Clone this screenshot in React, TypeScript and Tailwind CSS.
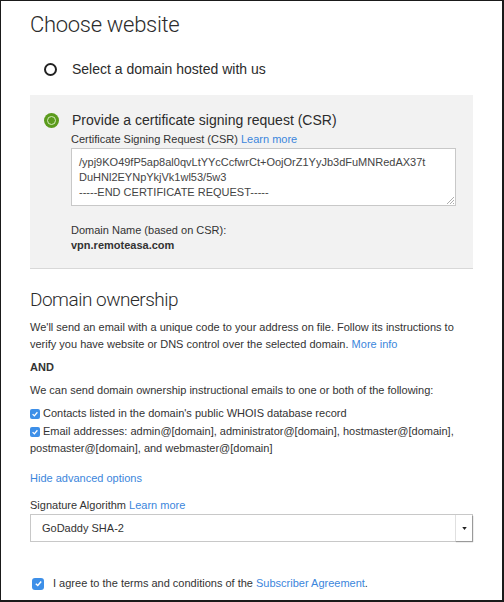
import React from "react";

function Check({ big = false }: { big?: boolean }) {
  return (
    <span
      className={`inline-grid shrink-0 place-items-center bg-[#3d8fe8] ${
        big ? "size-[12px] rounded-[3px]" : "size-[10px] rounded-[2px]"
      }`}
    >
      <svg viewBox="0 0 10 10" className={big ? "size-[9px]" : "size-[8px]"}>
        <path d="M2 5.2 L4.2 7.3 L8 2.8" fill="none" stroke="#fff" strokeWidth="1.6" />
      </svg>
    </span>
  );
}

const heading = { fontFamily: "Roboto, sans-serif" };

export default function App() {
  const link = "text-[#3b86dc]";
  return (
    <div
      className="h-[602px] w-[504px] overflow-hidden border-t border-l border-r-2 border-b-2 border-[#1a1a1a] bg-white text-[11px] leading-[17px] text-[#333]"
      style={{ fontFamily: '"Liberation Sans", Arial, sans-serif' }}
    >
      <div className="px-[29px] pt-[10px]">
        <h1 className="text-[22px] font-light leading-[28px] tracking-[-0.3px] text-[#2b2b2b]" style={heading}>
          Choose website
        </h1>

        {/* hosted domain option */}
        <div className="mt-[20px] flex items-center gap-[15px] pl-[14px] leading-[20px]">
          <span className="size-[13px] rounded-full border-2 border-[#222]" />
          <span className="text-[14px] text-[#2b2b2b]">Select a domain hosted with us</span>
        </div>

        {/* CSR option */}
        <div className="mt-[16px] border-b border-[#d8d8d8] bg-[#f2f2f2] pb-[15px] pt-[15px]">
          <div className="flex items-center gap-[13px] pl-[14px] leading-[20px]">
            <span className="grid size-[15px] place-items-center rounded-full bg-[#5b9b1d]">
              <span className="size-[9px] rounded-full border border-[#d6ebc0] bg-[#5b9b1d]" />
            </span>
            <span className="text-[14px] text-[#2b2b2b]">Provide a certificate signing request (CSR)</span>
          </div>
          <div className="pl-[41px] pr-[17px]">
            <p className="mt-[1px] leading-[16px]">
              Certificate Signing Request (CSR) <span className={link}>Learn more</span>
            </p>
            <div className="relative mt-[1px] h-[58px] border border-[#c8c8c8] bg-white px-[7px] pt-[6px] leading-[15px] text-[#444]">
              <p>/ypj9KO49fP5ap8al0qvLtYYcCcfwrCt+OojOrZ1YyJb3dFuMNRedAX37t</p>
              <p>DuHNl2EYNpYkjVk1wl53/5w3</p>
              <p>-----END CERTIFICATE REQUEST-----</p>
              <svg viewBox="0 0 8 8" className="absolute bottom-[1px] right-[1px] size-[8px]">
                <path d="M8 1 L1 8 M8 4 L4 8 M8 7 L7 8" stroke="#999" strokeWidth="0.8" />
              </svg>
            </div>
            <p className="mt-[17px] leading-[15px]">Domain Name (based on CSR):</p>
            <p className="font-bold leading-[15px]">vpn.remoteasa.com</p>
          </div>
        </div>

        <h2 className="mt-[17px] text-[19px] font-light leading-[28px] tracking-[-0.5px] text-[#2b2b2b]" style={heading}>
          Domain ownership
        </h2>
        <p className="mt-[5px]">
          We'll send an email with a unique code to your address on file. Follow its instructions to verify you have
          website or DNS control over the selected domain. <span className={link}>More info</span>
        </p>
        <p className="mt-[6px] font-bold">AND</p>
        <p className="mt-[6px]">We can send domain ownership instructional emails to one or both of the following:</p>
        <div className="mt-[6px] flex items-center gap-[3px]">
          <Check />
          <span>Contacts listed in the domain's public WHOIS database record</span>
        </div>
        <p className="mt-[1px] leading-[16px]">
          <span className="mr-[3px] inline-block align-[-1px]">
            <Check />
          </span>
          Email addresses: admin@[domain], administrator@[domain], hostmaster@[domain], postmaster@[domain], and
          webmaster@[domain]
        </p>

        <p className={`mt-[14px] ${link}`}>Hide advanced options</p>

        <p className="mt-[10px]">
          Signature Algorithm <span className={link}>Learn more</span>
        </p>
        <div className="flex h-[28px] items-stretch border border-[#c8c8c8] bg-white">
          <span className="flex flex-1 items-center pl-[11px] text-[11px] text-[#333]">GoDaddy SHA-2</span>
          <span className="grid w-[17px] place-items-center border-l border-[#e0e0e0] shadow-[1px_1px_1px_#9a9a9a]">
            <svg viewBox="0 0 6 4" className="h-[3px] w-[5px]">
              <path d="M0 0 L6 0 L3 4 Z" fill="#222" />
            </svg>
          </span>
        </div>

        <div className="mt-[33px] flex items-center gap-[9px] pl-[2px]">
          <Check big />
          <span>
            I agree to the terms and conditions of the <span className={link}>Subscriber Agreement</span>.
          </span>
        </div>
      </div>
    </div>
  );
}
